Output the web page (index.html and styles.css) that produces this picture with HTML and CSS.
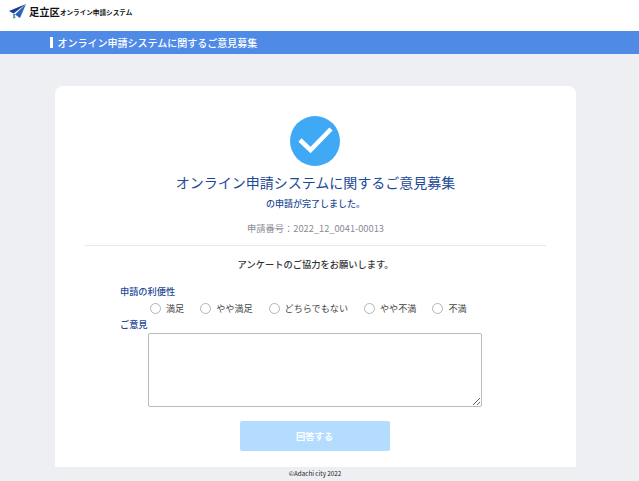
FILE: index.html
```html
<!DOCTYPE html>
<html lang="ja">
<head>
<meta charset="utf-8">
<title>オンライン申請システムに関するご意見募集</title>
<link rel="stylesheet" href="styles.css">
</head>
<body>
<header class="site-header">
  <svg class="logo-icon" width="18" height="15" viewBox="0 0 18 15"><path d="M0 7 17 0 4.500 9.500z" fill="#1a3f8f"/><path d="M17 0 6 10.500 11 14z" fill="#2a62b8"/><path d="M4.500 9.500 6 10.500 4.500 14z" fill="#1a3f8f"/><path d="M4.500 12 7 13 4.500 15z" fill="#3a9a5a"/></svg>
  <span class="logo-main">足立区</span><span class="logo-sub">オンライン申請システム</span>
</header>
<div class="title-bar"><span class="title-mark"></span><span>オンライン申請システムに関するご意見募集</span></div>
<main class="content">
  <section class="card">
    <svg class="check" width="50" height="50" viewBox="0 0 50 50"><circle cx="25" cy="25" r="25" fill="#3fa9f5"/><path d="M10 24 20.500 34 41 13" fill="none" stroke="#fff" stroke-width="4.500"/></svg>
    <h1 class="heading">オンライン申請システムに関するご意見募集</h1>
    <p class="done">の申請が完了しました。</p>
    <p class="number">申請番号：2022_12_0041-00013</p>
    <hr class="rule">
    <p class="ask">アンケートのご協力をお願いします。</p>
    <form class="survey">
      <div class="label">申請の利便性</div>
      <div class="options">
        <label class="option"><span class="radio"></span>満足</label>
        <label class="option"><span class="radio"></span>やや満足</label>
        <label class="option"><span class="radio"></span>どちらでもない</label>
        <label class="option"><span class="radio"></span>やや不満</label>
        <label class="option"><span class="radio"></span>不満</label>
      </div>
      <div class="label">ご意見</div>
      <textarea class="opinion"></textarea>
      <div class="actions"><button class="submit" type="button">回答する</button></div>
    </form>
  </section>
</main>
<footer class="footer">©Adachi city 2022</footer>
</body>
</html>
```
FILE: styles.css
```css
* { box-sizing: border-box; }
html, body { margin: 0; height: 481px; overflow: hidden; }
body { background: #eeeff3; font-family: "Noto Sans CJK JP", "Noto Sans", sans-serif; color: #333; position: relative; }
.site-header { height: 31px; background: #fff; display: flex; align-items: flex-start; padding: 4px 0 0 9px; }
.logo-icon { margin-right: 2px; }
.logo-main { font-size: 10.300px; font-weight: 700; color: #111; line-height: 15px; }
.logo-sub { font-size: 6.600px; font-weight: 700; color: #111; line-height: 17px; }
.title-bar { height: 23px; background: #4f8ae6; color: #fff; font-size: 10px; font-weight: 500; display: flex; align-items: center; padding-left: 50px; }
.title-mark { width: 2.500px; height: 11px; background: #fff; margin-right: 5px; }
.content { padding: 32px 63px 0 55px; }
.card { background: #fff; border-radius: 8px 8px 0 0; height: 381px; padding-top: 30px; display: flex; flex-direction: column; align-items: center; }
.check { display: block; margin-right: 2px; }
.heading { margin: 5px 0 0; font-size: 14px; font-weight: 400; line-height: 22px; color: #1d4a96; }
.done { margin: 4px 0 0; font-size: 9px; line-height: 14px; color: #1d4a96; font-weight: 500; }
.number { margin: 10px 0 0; font-size: 9.250px; line-height: 14px; color: #8a8a94; }
.rule { width: 461px; margin: 10px 0 0; border: 0; border-top: 1px solid #e8e8e8; }
.ask { margin: 11px 0 0; font-size: 9.250px; line-height: 14px; font-weight: 500; color: #333; }
.survey { width: 100%; padding-left: 65px; margin-top: 13px; }
.label { font-size: 9.200px; line-height: 14px; font-weight: 500; color: #1d4a96; }
.options { display: flex; gap: 16px; padding-left: 30px; margin-top: 1px; height: 18px; align-items: center; }
.option { display: flex; align-items: center; font-size: 9.100px; color: #444; }
.radio { width: 11px; height: 11px; border: 1px solid #b4b4b4; border-radius: 50%; margin-right: 5px; background: #fff; }
.opinion { display: block; width: 334px; height: 74px; margin: 2px 0 0 28px; border: 1px solid #bbb; border-radius: 2px; background: #fff; }
.actions { width: 334px; margin: 14px 0 0 28px; display: flex; justify-content: center; }
.submit { width: 150px; height: 30px; margin-left: -1px; border: 0; border-radius: 2px; background: #b3dcff; color: #fff; font: 700 9.300px "Noto Sans CJK JP", sans-serif; }
.footer { position: absolute; left: 0; right: 0; bottom: 0; height: 14px; padding-right: 9px; background: #eeeff3; text-align: center; font-size: 6.300px; line-height: 14px; color: #222; }
```
